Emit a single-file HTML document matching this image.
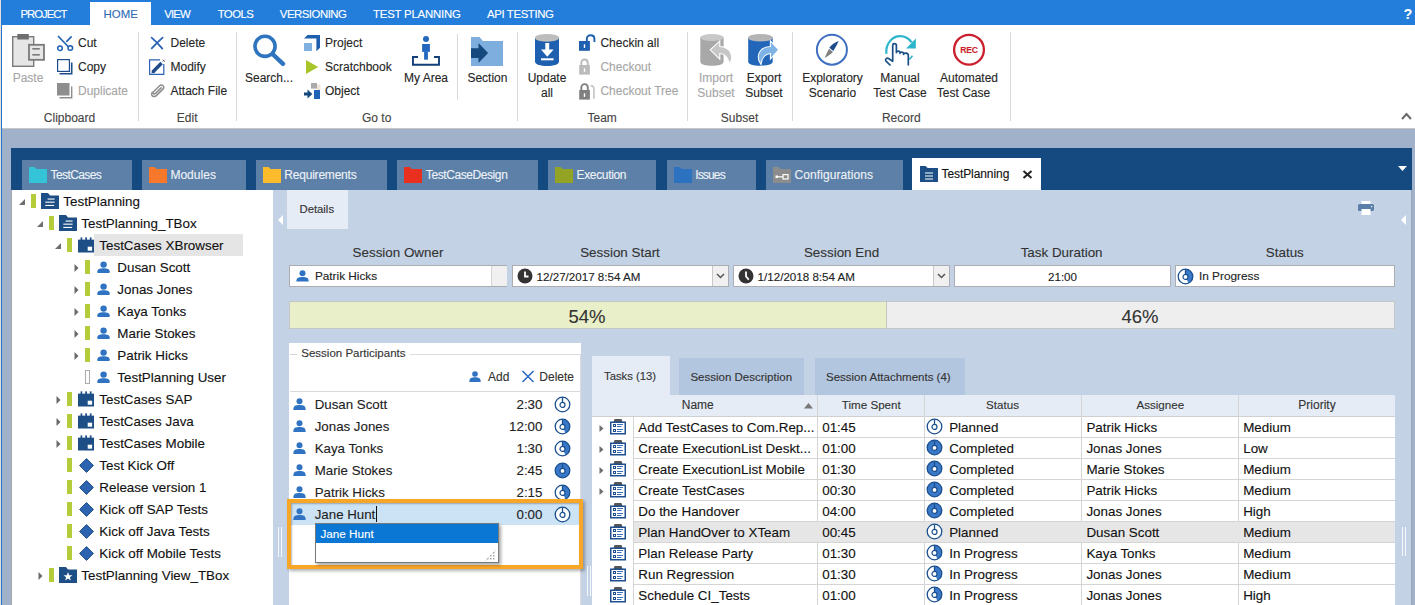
<!DOCTYPE html>
<html><head><meta charset="utf-8"><style>
html,body{margin:0;padding:0;width:1415px;height:605px;overflow:hidden;background:#A3B3CA}
body{position:relative;font-family:"Liberation Sans",sans-serif}
body>div,body>svg{position:absolute}
.t{white-space:nowrap;-webkit-text-stroke:0.12px currentColor}
</style></head><body>
<div style="left:0px;top:0px;width:1415px;height:605px;background:#A0B1C9;"></div>
<div style="left:0px;top:0px;width:1415px;height:25px;background:#237DDA;"></div>
<div style="left:1px;top:25px;width:1414px;height:103px;background:#FFFFFF;"></div>
<div style="left:2px;top:128px;width:1413px;height:1px;background:#C6C6C6;"></div>
<div style="left:1px;top:25px;width:1px;height:580px;background:#1E77D3;"></div>
<div style="left:0px;top:0px;width:1px;height:605px;background:#E6DFD8;"></div>
<div style="left:90px;top:2px;width:61px;height:24px;background:#FFFFFF;"></div>
<div class="t" style="left:20.50px;top:9.35px;font-size:11.4px;line-height:11.4px;color:#FFFFFF;letter-spacing:-1.051px;">PROJECT</div>
<div class="t" style="left:103.50px;top:9.35px;font-size:11.4px;line-height:11.4px;color:#2B6CB3;letter-spacing:0.033px;">HOME</div>
<div class="t" style="left:164.30px;top:9.35px;font-size:11.4px;line-height:11.4px;color:#FFFFFF;letter-spacing:-0.879px;">VIEW</div>
<div class="t" style="left:217.70px;top:9.35px;font-size:11.4px;line-height:11.4px;color:#FFFFFF;letter-spacing:-0.585px;">TOOLS</div>
<div class="t" style="left:279.80px;top:9.35px;font-size:11.4px;line-height:11.4px;color:#FFFFFF;letter-spacing:-0.487px;">VERSIONING</div>
<div class="t" style="left:373.00px;top:9.35px;font-size:11.4px;line-height:11.4px;color:#FFFFFF;letter-spacing:-0.198px;">TEST PLANNING</div>
<div class="t" style="left:487.00px;top:9.35px;font-size:11.4px;line-height:11.4px;color:#FFFFFF;letter-spacing:-0.374px;">API TESTING</div>
<div class="t" style="left:1403.50px;top:7.23px;font-size:14.5px;line-height:14.5px;color:#FFFFFF;letter-spacing:-1.360px;font-weight:bold">?</div>
<div style="left:138px;top:32px;width:1px;height:89px;background:#DADADA;"></div>
<div style="left:236px;top:32px;width:1px;height:89px;background:#DADADA;"></div>
<div style="left:457px;top:34px;width:1px;height:66px;background:#DADADA;"></div>
<div style="left:517px;top:32px;width:1px;height:89px;background:#DADADA;"></div>
<div style="left:687px;top:32px;width:1px;height:89px;background:#DADADA;"></div>
<div style="left:792px;top:32px;width:1px;height:89px;background:#DADADA;"></div>
<div style="left:1010px;top:32px;width:1px;height:89px;background:#DADADA;"></div>
<div class="t" style="left:9.50px;width:120px;text-align:center;top:111.84px;font-size:12px;line-height:12px;color:#444444;">Clipboard</div>
<div class="t" style="left:127.20px;width:120px;text-align:center;top:111.84px;font-size:12px;line-height:12px;color:#444444;">Edit</div>
<div class="t" style="left:316.65px;width:120px;text-align:center;top:111.84px;font-size:12px;line-height:12px;color:#444444;">Go to</div>
<div class="t" style="left:542.15px;width:120px;text-align:center;top:111.84px;font-size:12px;line-height:12px;color:#444444;">Team</div>
<div class="t" style="left:679.55px;width:120px;text-align:center;top:111.84px;font-size:12px;line-height:12px;color:#444444;">Subset</div>
<div class="t" style="left:841.30px;width:120px;text-align:center;top:111.84px;font-size:12px;line-height:12px;color:#444444;">Record</div>
<div class="t" style="left:78px;top:36.84px;font-size:12px;line-height:12px;color:#262626;">Cut</div>
<div class="t" style="left:78px;top:60.84px;font-size:12px;line-height:12px;color:#262626;">Copy</div>
<div class="t" style="left:78px;top:84.84px;font-size:12px;line-height:12px;color:#A6A6A6;">Duplicate</div>
<div class="t" style="left:-2.00px;width:60px;text-align:center;top:71.84px;font-size:12px;line-height:12px;color:#A6A6A6;">Paste</div>
<div class="t" style="left:170.5px;top:36.84px;font-size:12px;line-height:12px;color:#262626;">Delete</div>
<div class="t" style="left:170.5px;top:60.84px;font-size:12px;line-height:12px;color:#262626;">Modify</div>
<div class="t" style="left:170.5px;top:84.84px;font-size:12px;line-height:12px;color:#262626;">Attach File</div>
<div class="t" style="left:229.00px;width:80px;text-align:center;top:71.84px;font-size:12px;line-height:12px;color:#262626;">Search...</div>
<div class="t" style="left:325px;top:36.84px;font-size:12px;line-height:12px;color:#262626;">Project</div>
<div class="t" style="left:325px;top:60.84px;font-size:12px;line-height:12px;color:#262626;">Scratchbook</div>
<div class="t" style="left:325px;top:84.84px;font-size:12px;line-height:12px;color:#262626;">Object</div>
<div class="t" style="left:386.00px;width:80px;text-align:center;top:71.84px;font-size:12px;line-height:12px;color:#262626;">My Area</div>
<div class="t" style="left:447.40px;width:80px;text-align:center;top:71.84px;font-size:12px;line-height:12px;color:#262626;">Section</div>
<div class="t" style="left:507.00px;width:80px;text-align:center;top:71.84px;font-size:12px;line-height:12px;color:#262626;">Update</div>
<div class="t" style="left:507.00px;width:80px;text-align:center;top:86.64px;font-size:12px;line-height:12px;color:#262626;">all</div>
<div class="t" style="left:600.4px;top:36.84px;font-size:12px;line-height:12px;color:#262626;">Checkin all</div>
<div class="t" style="left:600.4px;top:60.84px;font-size:12px;line-height:12px;color:#A6A6A6;">Checkout</div>
<div class="t" style="left:600.4px;top:84.84px;font-size:12px;line-height:12px;color:#A6A6A6;">Checkout Tree</div>
<div class="t" style="left:676.00px;width:80px;text-align:center;top:71.84px;font-size:12px;line-height:12px;color:#A6A6A6;">Import</div>
<div class="t" style="left:676.00px;width:80px;text-align:center;top:86.64px;font-size:12px;line-height:12px;color:#A6A6A6;">Subset</div>
<div class="t" style="left:724.00px;width:80px;text-align:center;top:71.84px;font-size:12px;line-height:12px;color:#262626;">Export</div>
<div class="t" style="left:724.00px;width:80px;text-align:center;top:86.64px;font-size:12px;line-height:12px;color:#262626;">Subset</div>
<div class="t" style="left:792.50px;width:80px;text-align:center;top:71.84px;font-size:12px;line-height:12px;color:#262626;">Exploratory</div>
<div class="t" style="left:792.50px;width:80px;text-align:center;top:86.64px;font-size:12px;line-height:12px;color:#262626;">Scenario</div>
<div class="t" style="left:860.00px;width:80px;text-align:center;top:71.84px;font-size:12px;line-height:12px;color:#262626;">Manual</div>
<div class="t" style="left:860.00px;width:80px;text-align:center;top:86.64px;font-size:12px;line-height:12px;color:#262626;">Test Case</div>
<div class="t" style="left:929.00px;width:80px;text-align:center;top:71.84px;font-size:12px;line-height:12px;color:#262626;">Automated</div>
<div class="t" style="left:923.50px;width:80px;text-align:center;top:86.64px;font-size:12px;line-height:12px;color:#262626;">Test Case</div>
<svg style="left:1401px;top:112px" width="11" height="8" viewBox="0 0 11 8"><path d="M1 7 L5.5 2 L10 7" stroke="#6A6A6A" stroke-width="2" fill="none"/></svg>
<svg style="left:12px;top:34px" width="33" height="33" viewBox="0 0 33 33"><rect x="0.7" y="2.7" width="21" height="29.6" fill="#E6E6E6" stroke="#7A7A7A" stroke-width="1.4"/><rect x="5.3" y="0" width="11.5" height="5.5" fill="#6E6E6E"/><rect x="17" y="10.8" width="15" height="15" fill="#E6E6E6" stroke="#7A7A7A" stroke-width="1.8"/><rect x="20.3" y="14" width="7.5" height="1.6" fill="#7A7A7A"/><rect x="20.3" y="20" width="7.5" height="1.6" fill="#7A7A7A"/></svg>
<svg style="left:57px;top:35px" width="17" height="17" viewBox="0 0 17 17"><path d="M1 1 L11.8 12.2" stroke="#1F5FAF" stroke-width="1.6"/><path d="M14.6 1.4 L9.3 6.9" stroke="#1F5FAF" stroke-width="1.6"/><circle cx="3" cy="13.2" r="2.3" fill="none" stroke="#1F5FAF" stroke-width="1.5"/><circle cx="13.3" cy="13" r="2.3" fill="none" stroke="#1F5FAF" stroke-width="1.5"/></svg>
<svg style="left:57px;top:58px" width="17" height="17" viewBox="0 0 17 17"><rect x="0.6" y="1.6" width="11.8" height="11.8" fill="#FFFFFF" stroke="#1E4C8A" stroke-width="1.2"/><path d="M14.7 4.5 V15.7 H2.5" stroke="#1E4C8A" stroke-width="1.6" fill="none"/></svg>
<svg style="left:57px;top:82px" width="17" height="17" viewBox="0 0 17 17"><rect x="0" y="1" width="12.5" height="12.5" fill="#8E8E8E"/><path d="M14.7 4.5 V15.7 H2.5" stroke="#8E8E8E" stroke-width="1.4" fill="none"/></svg>
<svg style="left:150px;top:36px" width="15" height="14" viewBox="0 0 15 14"><path d="M1.6 1.6 C5 4.5 9 8.5 12.3 12.6 M12.6 1.6 C9 4.8 5 8.8 1.7 12.4" stroke="#2A62B5" stroke-width="1.8" fill="none" stroke-linecap="round"/></svg>
<svg style="left:149px;top:58px" width="17" height="18" viewBox="0 0 17 18"><path d="M11 1.8 H0.6 V16.4 H14.8 V6" fill="none" stroke="#2A62B5" stroke-width="1.2"/><path d="M3.6 14.2 L12.6 5" stroke="#1E4C8A" stroke-width="3.4" stroke-linecap="butt"/><path d="M3.2 12 L2.4 15.4 L5.8 14.6 Z" fill="#1E4C8A"/><path d="M13.6 1.6 L15.8 3.8 M15.8 1.6 L13.6 3.8" stroke="#666" stroke-width="0.9"/></svg>
<svg style="left:151px;top:84px" width="14" height="14" viewBox="0 0 14 14"><path d="M10.6 3.4 L4.6 9.4 C3.9 10.1 3 10.1 2.5 9.6 C2 9.1 2.1 8.2 2.8 7.5 L8.6 1.8 C9.6 0.8 11.2 0.8 12 1.7 C12.9 2.6 12.9 4.1 11.9 5.1 L5.6 11.4 C4.2 12.8 2.3 12.9 1.3 11.9 C0.3 10.9 0.5 9.2 1.8 7.8" stroke="#8E8E8E" stroke-width="1.5" fill="none"/></svg>
<svg style="left:252px;top:33px" width="34" height="34" viewBox="0 0 34 34"><circle cx="13" cy="13.3" r="10.1" fill="none" stroke="#2F74BF" stroke-width="3.6"/><path d="M21.6 22 L31 30.8" stroke="#2F74BF" stroke-width="4.4" stroke-linecap="round"/></svg>
<svg style="left:304px;top:35px" width="17" height="17" viewBox="0 0 17 17"><path d="M3.5 0 H16 V12.8 L12.4 16.2 V3.6 H0 Z" fill="#1F5FAF"/><rect x="0" y="8" width="8" height="8" fill="#7FB0E0"/></svg>
<svg style="left:306px;top:60px" width="13" height="15" viewBox="0 0 13 15"><path d="M0 0 L12.2 7 L0 14 Z" fill="#A8C62A"/></svg>
<svg style="left:303px;top:82px" width="18" height="18" viewBox="0 0 18 18"><rect x="13.5" y="2.5" width="4" height="5.5" fill="#EFE6D8"/><rect x="8" y="1" width="6" height="5.6" fill="#ABABAB"/><rect x="11" y="8" width="6" height="9" fill="#1F64B7"/><path d="M1 10.5 H4.5 V7.5 L9.3 12 L4.5 16.4 V13.4 H1 Z" fill="#15497E"/></svg>
<svg style="left:411px;top:35px" width="30" height="32" viewBox="0 0 30 32"><circle cx="15" cy="3.9" r="3" fill="#2367BF"/><rect x="11.1" y="9" width="7.8" height="7.9" fill="#2367BF"/><rect x="13.1" y="16.9" width="3.8" height="7.8" fill="#2367BF"/><path d="M7 21.95 H1.95 V29.8 H28 V21.95 H23" stroke="#123F7A" stroke-width="1.9" fill="none"/></svg>
<svg style="left:471px;top:37px" width="33" height="30" viewBox="0 0 33 30"><path d="M0 0 H8.6 L11.9 4.1 H32 V29 H0 Z" fill="#7EAEDE"/><path d="M0 11.2 H7.5 V6 L17.1 16 L7.5 26 V21 H0 Z" fill="#15497E"/></svg>
<svg style="left:535px;top:33px" width="25" height="34" viewBox="0 0 25 34"><path d="M0 4 V28.5 C0 31.5 5.5 33 12 33 C18.5 33 24 31.5 24 28.5 V4 Z" fill="#1F5FAF"/><ellipse cx="12" cy="4.6" rx="12" ry="3.6" fill="#BDBDBD"/><path d="M0 4.6 C0 6.6 5.5 8.2 12 8.2 C18.5 8.2 24 6.6 24 4.6" stroke="#D7CCBE" stroke-width="0.7" fill="none"/><rect x="10.3" y="10" width="3.9" height="10" fill="#FFFFFF"/><path d="M6 16.6 H18.6 L12.3 23.8 Z" fill="#FFFFFF"/><rect x="6" y="25.3" width="12.6" height="2" fill="#FFFFFF"/></svg>
<svg style="left:578px;top:34px" width="18" height="18" viewBox="0 0 18 18"><rect x="1" y="7" width="10.9" height="9.8" fill="#1F5FAF"/><path d="M8.8 7.5 V4.8 C8.8 2.6 10.6 1.3 12.6 1.3 C14.6 1.3 16.4 2.6 16.4 4.8 V8" stroke="#1F5FAF" stroke-width="1.9" fill="none"/><rect x="5.8" y="10.3" width="1.4" height="3.6" fill="#fff"/></svg>
<svg style="left:578px;top:58px" width="18" height="18" viewBox="0 0 18 18"><rect x="1.2" y="7" width="10.7" height="9.6" fill="#BBBBBB"/><path d="M3.3 7.5 V5 C3.3 2.7 4.8 1.5 6.5 1.5 C8.2 1.5 9.8 2.7 9.8 5 V7.5" stroke="#BBBBBB" stroke-width="1.9" fill="none"/><rect x="5.8" y="10.3" width="1.4" height="3.6" fill="#fff"/></svg>
<svg style="left:578px;top:82px" width="18" height="18" viewBox="0 0 18 18"><path d="M12.5 3.6 C14.6 3.6 15.9 5 15.9 7 V16.8" stroke="#C8C8C8" stroke-width="1.8" fill="none"/><rect x="1.2" y="8" width="10.7" height="9.6" fill="#808080"/><path d="M3.3 8.5 V5.8 C3.3 3.5 4.8 2.1 6.5 2.1 C8.2 2.1 9.8 3.5 9.8 5.8 V8.5" stroke="#808080" stroke-width="1.9" fill="none"/><rect x="5.8" y="11.3" width="1.4" height="3.6" fill="#fff"/></svg>
<svg style="left:700px;top:33px" width="33" height="34" viewBox="0 0 33 34"><path d="M0.3 4 V28.5 C0.3 31.5 5.5 32.7 12 32.7 C18.5 32.7 23.6 31.5 23.6 28.5 V4 Z" fill="#A8A8A8"/><ellipse cx="12" cy="4.5" rx="11.7" ry="3.5" fill="#C8C8C8"/><path d="M10.2 16.8 L19.8 7.9 V13.5 C26 13.5 31.7 17 31.7 24.8 C31.7 27 30.8 29.5 29.4 31.4 C29 27 26 21 19.8 20.5 V26.1 Z" fill="#C6C6C6" stroke="#FFFFFF" stroke-width="1.1"/></svg>
<svg style="left:748px;top:33px" width="32" height="34" viewBox="0 0 32 34"><path d="M0.2 4 V28.5 C0.2 31.5 5.5 32.7 12.2 32.7 C18.9 32.7 24.7 31.5 24.7 28.5 V4 Z" fill="#2166B8"/><ellipse cx="12.4" cy="4.5" rx="12.2" ry="3.5" fill="#B4B4B4"/><path d="M0.2 4.5 C0.2 6.5 5.5 8 12.4 8 C19.3 8 24.7 6.5 24.7 4.5" stroke="#D7CCBE" stroke-width="0.7" fill="none"/><path d="M30.7 16.8 L22.4 7.9 V13.5 C15 13.5 10.3 18 10.3 24.5 C10.3 27 11.5 29.5 13 31.4 C13.5 27 16 21 22.4 20.5 V26.1 Z" fill="#7FB2E5" stroke="#FFFFFF" stroke-width="1.1"/></svg>
<svg style="left:815px;top:33px" width="34" height="34" viewBox="0 0 34 34"><circle cx="16.9" cy="16.7" r="15" fill="none" stroke="#3F6FC0" stroke-width="2"/><path d="M23.6 8 C22.5 11 20.5 14.5 18.3 17.9 L14.3 14.7 C16.8 11.8 19.6 9.4 23.6 8 Z" fill="#1E4C8A"/><path d="M18 18.9 L14 15.7 C12.5 18.5 11 21.5 9.6 25 C12.6 23.2 15.5 21.5 18 18.9 Z" fill="#808080"/></svg>
<svg style="left:884px;top:34px" width="33" height="33" viewBox="0 0 33 33"><path d="M2.4 19.8 C1.2 9.5 8.5 2.2 16.1 2.2 C21 2.2 25 4.6 27.6 8.4" stroke="#2DB5CC" stroke-width="2.2" fill="none"/><path d="M31.8 4.6 L22.1 14.4 H31.8 Z" fill="#2DB5CC"/><path d="M25.2 25.5 L28.5 21.8" stroke="#2DB5CC" stroke-width="1.6" fill="none"/><path d="M6.5 31.5 L1.8 26.8 C1 25.5 2.5 23.3 4.5 24.5 L8.7 27.3 V11.7 C8.7 9 12.4 9 12.4 11.7 V18.6 C12.4 16.6 16 16.6 16 18.8 V19.3 C16 17.6 19.6 17.6 19.6 19.6 V20.3 C19.6 18.6 24.3 18.6 24.3 21.6 V31.6" stroke="#1C4F86" stroke-width="1.7" fill="none" stroke-linejoin="round"/></svg>
<svg style="left:952px;top:33px" width="34" height="34" viewBox="0 0 34 34"><circle cx="17" cy="16.7" r="14.9" fill="none" stroke="#CC1F2D" stroke-width="2.3"/></svg>
<div class="t" style="left:960.3px;top:45.62px;font-size:8.6px;line-height:8.6px;color:#CC1F2D;font-weight:bold;letter-spacing:-0.2px">REC</div>
<div style="left:11px;top:148px;width:1401px;height:42px;background:#154A80;"></div>
<div style="left:22px;top:160px;width:110px;height:30px;background:#5C80A8;"></div>
<svg style="left:29px;top:167px" width="18" height="16" viewBox="0 0 18 16"><path d="M0 0 H5.6 L7.6 2 H18 V16 H0 Z" fill="#35C3D7"/></svg>
<div class="t" style="left:50.50px;top:169.04px;font-size:12px;line-height:12px;color:#EEF2F7;letter-spacing:-0.590px;">TestCases</div>
<div style="left:142px;top:160px;width:104px;height:30px;background:#5C80A8;"></div>
<svg style="left:149px;top:167px" width="18" height="16" viewBox="0 0 18 16"><path d="M0 0 H5.6 L7.6 2 H18 V16 H0 Z" fill="#F7782A"/></svg>
<div class="t" style="left:170.40px;top:169.04px;font-size:12px;line-height:12px;color:#EEF2F7;letter-spacing:0.023px;">Modules</div>
<div style="left:256px;top:160px;width:131px;height:30px;background:#5C80A8;"></div>
<svg style="left:263px;top:167px" width="18" height="16" viewBox="0 0 18 16"><path d="M0 0 H5.6 L7.6 2 H18 V16 H0 Z" fill="#FBBB2A"/></svg>
<div class="t" style="left:284.30px;top:169.04px;font-size:12px;line-height:12px;color:#EEF2F7;letter-spacing:-0.209px;">Requirements</div>
<div style="left:397px;top:160px;width:141px;height:30px;background:#5C80A8;"></div>
<svg style="left:404px;top:167px" width="18" height="16" viewBox="0 0 18 16"><path d="M0 0 H5.6 L7.6 2 H18 V16 H0 Z" fill="#E9301F"/></svg>
<div class="t" style="left:425.80px;top:169.04px;font-size:12px;line-height:12px;color:#EEF2F7;letter-spacing:-0.413px;">TestCaseDesign</div>
<div style="left:548px;top:160px;width:108px;height:30px;background:#5C80A8;"></div>
<svg style="left:555px;top:167px" width="18" height="16" viewBox="0 0 18 16"><path d="M0 0 H5.6 L7.6 2 H18 V16 H0 Z" fill="#93A323"/></svg>
<div class="t" style="left:576.50px;top:169.04px;font-size:12px;line-height:12px;color:#EEF2F7;letter-spacing:-0.338px;">Execution</div>
<div style="left:667px;top:160px;width:89px;height:30px;background:#5C80A8;"></div>
<svg style="left:674px;top:167px" width="18" height="16" viewBox="0 0 18 16"><path d="M0 0 H5.6 L7.6 2 H18 V16 H0 Z" fill="#2D72C0"/></svg>
<div class="t" style="left:695.20px;top:169.04px;font-size:12px;line-height:12px;color:#EEF2F7;letter-spacing:-0.836px;">Issues</div>
<div style="left:766px;top:160px;width:137px;height:30px;background:#5C80A8;"></div>
<svg style="left:773px;top:167px" width="18" height="16" viewBox="0 0 18 16"><path d="M0 0 H5.6 L7.6 2 H18 V16 H0 Z" fill="#8C8C8C"/></svg>
<div class="t" style="left:794.50px;top:169.04px;font-size:12px;line-height:12px;color:#EEF2F7;letter-spacing:0.086px;">Configurations</div>
<svg style="left:773px;top:167px" width="18" height="16" viewBox="0 0 18 16"><rect x="2.5" y="8.5" width="2.5" height="2.5" fill="#fff"/><rect x="5" y="9.2" width="5" height="1.2" fill="#fff"/><rect x="10" y="7.6" width="5" height="4.4" fill="none" stroke="#fff" stroke-width="1.2"/></svg>
<div style="left:912px;top:158px;width:129px;height:32px;background:#FFFFFF;"></div>
<svg style="left:920px;top:166px" width="18" height="16" viewBox="0 0 18 16"><path d="M0 0 H5.6 L7.6 2 H18 V16 H0 Z" fill="#1D4E86"/><path d="M5 7 H13 M5 10 H13 M5 13 H13" stroke="#fff" stroke-width="1.2"/></svg>
<div class="t" style="left:941.50px;top:168.04px;font-size:12px;line-height:12px;color:#111111;letter-spacing:-0.083px;">TestPlanning</div>
<svg style="left:1022px;top:170px" width="11" height="9" viewBox="0 0 11 9"><path d="M1.5 1 L9.5 8 M9.5 1 L1.5 8" stroke="#222" stroke-width="2"/></svg>
<svg style="left:1398px;top:166px" width="9" height="5" viewBox="0 0 9 5"><path d="M0 0 H9 L4.5 5 Z" fill="#FFFFFF"/></svg>
<div style="left:11px;top:190px;width:1401px;height:415px;background:#C3D2E5;"></div>
<div style="left:1411px;top:190px;width:1px;height:415px;background:#9AA7B8;"></div>
<div style="left:11px;top:190px;width:262px;height:415px;background:#FFFFFF;"></div>
<div style="left:11px;top:190px;width:1px;height:415px;background:#A8A8A8;"></div>
<div style="left:94px;top:234px;width:149px;height:22px;background:#E5E5E5;"></div>
<svg style="left:19px;top:199px" width="6" height="6" viewBox="0 0 6 6"><path d="M6 0 V6 H0 Z" fill="#6E6E6E"/></svg>
<div style="left:31px;top:194px;width:5px;height:14px;background:#B4CB3A;"></div>
<svg style="left:41px;top:193px" width="18" height="16" viewBox="0 0 18 16"><path d="M0 0 H7 L9 2.5 H18 V16 H0 Z" fill="#1D4E86"/><rect x="6.6" y="5.5" width="7" height="1.1" fill="#fff"/><rect x="4.3" y="8.6" width="9.3" height="1.1" fill="#fff"/><rect x="4.3" y="11.9" width="8.8" height="1.1" fill="#fff"/></svg>
<div class="t" style="left:63.3px;top:194.96px;font-size:13.4px;line-height:13.4px;color:#111111;">TestPlanning</div>
<svg style="left:37px;top:221px" width="6" height="6" viewBox="0 0 6 6"><path d="M6 0 V6 H0 Z" fill="#6E6E6E"/></svg>
<div style="left:49px;top:216px;width:5px;height:14px;background:#B4CB3A;"></div>
<svg style="left:59px;top:215px" width="18" height="16" viewBox="0 0 18 16"><path d="M0 0 H7 L9 2.5 H18 V16 H0 Z" fill="#1D4E86"/><rect x="6.6" y="5.5" width="7" height="1.1" fill="#fff"/><rect x="4.3" y="8.6" width="9.3" height="1.1" fill="#fff"/><rect x="4.3" y="11.9" width="8.8" height="1.1" fill="#fff"/></svg>
<div class="t" style="left:81.3px;top:216.96px;font-size:13.4px;line-height:13.4px;color:#111111;">TestPlanning_TBox</div>
<svg style="left:55px;top:243px" width="6" height="6" viewBox="0 0 6 6"><path d="M6 0 V6 H0 Z" fill="#6E6E6E"/></svg>
<div style="left:67px;top:238px;width:5px;height:14px;background:#B4CB3A;"></div>
<svg style="left:78px;top:237px" width="16" height="16" viewBox="0 0 16 16"><rect x="0" y="2.3" width="16" height="13.2" fill="#1D4E86"/><rect x="2.5" y="0.4" width="1.8" height="3.4" fill="#1D4E86"/><rect x="7.2" y="0.4" width="1.8" height="3.4" fill="#1D4E86"/><rect x="11.8" y="0.4" width="1.8" height="3.4" fill="#1D4E86"/><rect x="0" y="1.6" width="2.5" height="0.9" fill="#fff"/><rect x="4.3" y="1.6" width="2.9" height="0.9" fill="#fff"/><rect x="9" y="1.6" width="2.8" height="0.9" fill="#fff"/><rect x="13.6" y="1.6" width="2.4" height="0.9" fill="#fff"/><rect x="9.7" y="9.7" width="4.4" height="4" fill="#fff"/></svg>
<div class="t" style="left:99.3px;top:238.96px;font-size:13.4px;line-height:13.4px;color:#111111;">TestCases XBrowser</div>
<svg style="left:73.6px;top:264px" width="5" height="8" viewBox="0 0 5 8"><path d="M0.5 0 L4.5 4 L0.5 8 Z" fill="#6A6A6A"/></svg>
<div style="left:85px;top:260px;width:5px;height:14px;background:#B4CB3A;"></div>
<svg style="left:97px;top:261px" width="13" height="12" viewBox="0 0 13 12"><circle cx="6.6" cy="3.6" r="3.2" fill="#2F73C2"/><path d="M0.2 11 C0.2 8.3 2.5 7.3 6.5 7.3 C10.5 7.3 12.8 8.3 12.8 11 Q12.8 12 11.8 12 H1.2 Q0.2 12 0.2 11 Z" fill="#2F73C2"/></svg>
<div class="t" style="left:117.3px;top:260.96px;font-size:13.4px;line-height:13.4px;color:#111111;">Dusan Scott</div>
<svg style="left:73.6px;top:286px" width="5" height="8" viewBox="0 0 5 8"><path d="M0.5 0 L4.5 4 L0.5 8 Z" fill="#6A6A6A"/></svg>
<div style="left:85px;top:282px;width:5px;height:14px;background:#B4CB3A;"></div>
<svg style="left:97px;top:283px" width="13" height="12" viewBox="0 0 13 12"><circle cx="6.6" cy="3.6" r="3.2" fill="#2F73C2"/><path d="M0.2 11 C0.2 8.3 2.5 7.3 6.5 7.3 C10.5 7.3 12.8 8.3 12.8 11 Q12.8 12 11.8 12 H1.2 Q0.2 12 0.2 11 Z" fill="#2F73C2"/></svg>
<div class="t" style="left:117.3px;top:282.96px;font-size:13.4px;line-height:13.4px;color:#111111;">Jonas Jones</div>
<svg style="left:73.6px;top:308px" width="5" height="8" viewBox="0 0 5 8"><path d="M0.5 0 L4.5 4 L0.5 8 Z" fill="#6A6A6A"/></svg>
<div style="left:85px;top:304px;width:5px;height:14px;background:#B4CB3A;"></div>
<svg style="left:97px;top:305px" width="13" height="12" viewBox="0 0 13 12"><circle cx="6.6" cy="3.6" r="3.2" fill="#2F73C2"/><path d="M0.2 11 C0.2 8.3 2.5 7.3 6.5 7.3 C10.5 7.3 12.8 8.3 12.8 11 Q12.8 12 11.8 12 H1.2 Q0.2 12 0.2 11 Z" fill="#2F73C2"/></svg>
<div class="t" style="left:117.3px;top:304.96px;font-size:13.4px;line-height:13.4px;color:#111111;">Kaya Tonks</div>
<svg style="left:73.6px;top:330px" width="5" height="8" viewBox="0 0 5 8"><path d="M0.5 0 L4.5 4 L0.5 8 Z" fill="#6A6A6A"/></svg>
<div style="left:85px;top:326px;width:5px;height:14px;background:#B4CB3A;"></div>
<svg style="left:97px;top:327px" width="13" height="12" viewBox="0 0 13 12"><circle cx="6.6" cy="3.6" r="3.2" fill="#2F73C2"/><path d="M0.2 11 C0.2 8.3 2.5 7.3 6.5 7.3 C10.5 7.3 12.8 8.3 12.8 11 Q12.8 12 11.8 12 H1.2 Q0.2 12 0.2 11 Z" fill="#2F73C2"/></svg>
<div class="t" style="left:117.3px;top:326.96px;font-size:13.4px;line-height:13.4px;color:#111111;">Marie Stokes</div>
<svg style="left:73.6px;top:352px" width="5" height="8" viewBox="0 0 5 8"><path d="M0.5 0 L4.5 4 L0.5 8 Z" fill="#6A6A6A"/></svg>
<div style="left:85px;top:348px;width:5px;height:14px;background:#B4CB3A;"></div>
<svg style="left:97px;top:349px" width="13" height="12" viewBox="0 0 13 12"><circle cx="6.6" cy="3.6" r="3.2" fill="#2F73C2"/><path d="M0.2 11 C0.2 8.3 2.5 7.3 6.5 7.3 C10.5 7.3 12.8 8.3 12.8 11 Q12.8 12 11.8 12 H1.2 Q0.2 12 0.2 11 Z" fill="#2F73C2"/></svg>
<div class="t" style="left:117.3px;top:348.96px;font-size:13.4px;line-height:13.4px;color:#111111;">Patrik Hicks</div>
<div style="left:85px;top:370px;width:5px;height:14px;background:transparent;box-sizing:border-box;border:1px solid #AAAAAA"></div>
<svg style="left:97px;top:371px" width="13" height="12" viewBox="0 0 13 12"><circle cx="6.6" cy="3.6" r="3.2" fill="#2F73C2"/><path d="M0.2 11 C0.2 8.3 2.5 7.3 6.5 7.3 C10.5 7.3 12.8 8.3 12.8 11 Q12.8 12 11.8 12 H1.2 Q0.2 12 0.2 11 Z" fill="#2F73C2"/></svg>
<div class="t" style="left:117.3px;top:370.96px;font-size:13.4px;line-height:13.4px;color:#111111;">TestPlanning User</div>
<svg style="left:55.599999999999994px;top:396px" width="5" height="8" viewBox="0 0 5 8"><path d="M0.5 0 L4.5 4 L0.5 8 Z" fill="#6A6A6A"/></svg>
<div style="left:67px;top:392px;width:5px;height:14px;background:#B4CB3A;"></div>
<svg style="left:78px;top:391px" width="16" height="16" viewBox="0 0 16 16"><rect x="0" y="2.3" width="16" height="13.2" fill="#1D4E86"/><rect x="2.5" y="0.4" width="1.8" height="3.4" fill="#1D4E86"/><rect x="7.2" y="0.4" width="1.8" height="3.4" fill="#1D4E86"/><rect x="11.8" y="0.4" width="1.8" height="3.4" fill="#1D4E86"/><rect x="0" y="1.6" width="2.5" height="0.9" fill="#fff"/><rect x="4.3" y="1.6" width="2.9" height="0.9" fill="#fff"/><rect x="9" y="1.6" width="2.8" height="0.9" fill="#fff"/><rect x="13.6" y="1.6" width="2.4" height="0.9" fill="#fff"/><rect x="9.7" y="9.7" width="4.4" height="4" fill="#fff"/></svg>
<div class="t" style="left:99.3px;top:392.96px;font-size:13.4px;line-height:13.4px;color:#111111;">TestCases SAP</div>
<svg style="left:55.599999999999994px;top:418px" width="5" height="8" viewBox="0 0 5 8"><path d="M0.5 0 L4.5 4 L0.5 8 Z" fill="#6A6A6A"/></svg>
<div style="left:67px;top:414px;width:5px;height:14px;background:#B4CB3A;"></div>
<svg style="left:78px;top:413px" width="16" height="16" viewBox="0 0 16 16"><rect x="0" y="2.3" width="16" height="13.2" fill="#1D4E86"/><rect x="2.5" y="0.4" width="1.8" height="3.4" fill="#1D4E86"/><rect x="7.2" y="0.4" width="1.8" height="3.4" fill="#1D4E86"/><rect x="11.8" y="0.4" width="1.8" height="3.4" fill="#1D4E86"/><rect x="0" y="1.6" width="2.5" height="0.9" fill="#fff"/><rect x="4.3" y="1.6" width="2.9" height="0.9" fill="#fff"/><rect x="9" y="1.6" width="2.8" height="0.9" fill="#fff"/><rect x="13.6" y="1.6" width="2.4" height="0.9" fill="#fff"/><rect x="9.7" y="9.7" width="4.4" height="4" fill="#fff"/></svg>
<div class="t" style="left:99.3px;top:414.96px;font-size:13.4px;line-height:13.4px;color:#111111;">TestCases Java</div>
<svg style="left:55.599999999999994px;top:440px" width="5" height="8" viewBox="0 0 5 8"><path d="M0.5 0 L4.5 4 L0.5 8 Z" fill="#6A6A6A"/></svg>
<div style="left:67px;top:436px;width:5px;height:14px;background:#B4CB3A;"></div>
<svg style="left:78px;top:435px" width="16" height="16" viewBox="0 0 16 16"><rect x="0" y="2.3" width="16" height="13.2" fill="#1D4E86"/><rect x="2.5" y="0.4" width="1.8" height="3.4" fill="#1D4E86"/><rect x="7.2" y="0.4" width="1.8" height="3.4" fill="#1D4E86"/><rect x="11.8" y="0.4" width="1.8" height="3.4" fill="#1D4E86"/><rect x="0" y="1.6" width="2.5" height="0.9" fill="#fff"/><rect x="4.3" y="1.6" width="2.9" height="0.9" fill="#fff"/><rect x="9" y="1.6" width="2.8" height="0.9" fill="#fff"/><rect x="13.6" y="1.6" width="2.4" height="0.9" fill="#fff"/><rect x="9.7" y="9.7" width="4.4" height="4" fill="#fff"/></svg>
<div class="t" style="left:99.3px;top:436.96px;font-size:13.4px;line-height:13.4px;color:#111111;">TestCases Mobile</div>
<div style="left:67px;top:458px;width:5px;height:14px;background:#B4CB3A;"></div>
<svg style="left:79px;top:457.5px" width="15" height="15" viewBox="0 0 15 15"><path d="M7.5 0.6 L14.4 7.5 L7.5 14.4 L0.6 7.5 Z" fill="#2D64B0" stroke="#1D4E86" stroke-width="1"/></svg>
<div class="t" style="left:99.3px;top:458.96px;font-size:13.4px;line-height:13.4px;color:#111111;">Test Kick Off</div>
<div style="left:67px;top:480px;width:5px;height:14px;background:#B4CB3A;"></div>
<svg style="left:79px;top:479.5px" width="15" height="15" viewBox="0 0 15 15"><path d="M7.5 0.6 L14.4 7.5 L7.5 14.4 L0.6 7.5 Z" fill="#2D64B0" stroke="#1D4E86" stroke-width="1"/></svg>
<div class="t" style="left:99.3px;top:480.96px;font-size:13.4px;line-height:13.4px;color:#111111;">Release version 1</div>
<div style="left:67px;top:502px;width:5px;height:14px;background:#B4CB3A;"></div>
<svg style="left:79px;top:501.5px" width="15" height="15" viewBox="0 0 15 15"><path d="M7.5 0.6 L14.4 7.5 L7.5 14.4 L0.6 7.5 Z" fill="#2D64B0" stroke="#1D4E86" stroke-width="1"/></svg>
<div class="t" style="left:99.3px;top:502.96px;font-size:13.4px;line-height:13.4px;color:#111111;">Kick off SAP Tests</div>
<div style="left:67px;top:524px;width:5px;height:14px;background:#B4CB3A;"></div>
<svg style="left:79px;top:523.5px" width="15" height="15" viewBox="0 0 15 15"><path d="M7.5 0.6 L14.4 7.5 L7.5 14.4 L0.6 7.5 Z" fill="#2D64B0" stroke="#1D4E86" stroke-width="1"/></svg>
<div class="t" style="left:99.3px;top:524.96px;font-size:13.4px;line-height:13.4px;color:#111111;">Kick off Java Tests</div>
<div style="left:67px;top:546px;width:5px;height:14px;background:#B4CB3A;"></div>
<svg style="left:79px;top:545.5px" width="15" height="15" viewBox="0 0 15 15"><path d="M7.5 0.6 L14.4 7.5 L7.5 14.4 L0.6 7.5 Z" fill="#2D64B0" stroke="#1D4E86" stroke-width="1"/></svg>
<div class="t" style="left:99.3px;top:546.96px;font-size:13.4px;line-height:13.4px;color:#111111;">Kick off Mobile Tests</div>
<svg style="left:37.599999999999994px;top:572px" width="5" height="8" viewBox="0 0 5 8"><path d="M0.5 0 L4.5 4 L0.5 8 Z" fill="#6A6A6A"/></svg>
<div style="left:49px;top:568px;width:5px;height:14px;background:#B4CB3A;"></div>
<svg style="left:59px;top:567px" width="18" height="16" viewBox="0 0 18 16"><path d="M0 0 H7 L9 2.5 H18 V16 H0 Z" fill="#1D4E86"/><path d="M9 5 L10.2 8.2 L13.5 8.3 L10.9 10.3 L11.8 13.5 L9 11.6 L6.2 13.5 L7.1 10.3 L4.5 8.3 L7.8 8.2 Z" fill="#fff"/></svg>
<div class="t" style="left:81.3px;top:568.96px;font-size:13.4px;line-height:13.4px;color:#111111;">TestPlanning View_TBox</div>
<svg style="left:278px;top:215px" width="5" height="10" viewBox="0 0 5 10"><path d="M5 0 V10 L0 5 Z" fill="#FFFFFF"/></svg>
<div style="left:287px;top:190px;width:61px;height:39px;background:#E5ECF5;"></div>
<div class="t" style="left:299.5px;top:204.43px;font-size:11.3px;line-height:11.3px;color:#333333;">Details</div>
<svg style="left:1358px;top:201px" width="16" height="14" viewBox="0 0 16 14"><rect x="3.5" y="0" width="9" height="4" fill="#FFFFFF"/><rect x="0" y="3" width="16" height="7" rx="1.5" fill="#5A7FA8"/><rect x="3.5" y="8" width="9" height="6" fill="#FFFFFF"/><rect x="13" y="5" width="1.2" height="1.2" fill="#fff"/></svg>
<svg style="left:1401px;top:215px" width="5" height="10" viewBox="0 0 5 10"><path d="M5 0 V10 L0 5 Z" fill="#FFFFFF"/></svg>
<div class="t" style="left:298.00px;width:200px;text-align:center;top:245.86px;font-size:13.4px;line-height:13.4px;color:#333333;">Session Owner</div>
<div class="t" style="left:520.00px;width:200px;text-align:center;top:245.86px;font-size:13.4px;line-height:13.4px;color:#333333;">Session Start</div>
<div class="t" style="left:741.50px;width:200px;text-align:center;top:245.86px;font-size:13.4px;line-height:13.4px;color:#333333;">Session End</div>
<div class="t" style="left:961.60px;width:200px;text-align:center;top:245.86px;font-size:13.4px;line-height:13.4px;color:#333333;">Task Duration</div>
<div class="t" style="left:1184.80px;width:200px;text-align:center;top:245.86px;font-size:13.4px;line-height:13.4px;color:#333333;">Status</div>
<div style="left:289px;top:265px;width:218px;height:22px;background:#FFFFFF;box-sizing:border-box;border:1px solid #ABADB3"></div>
<div style="left:512px;top:265px;width:217px;height:22px;background:#FFFFFF;box-sizing:border-box;border:1px solid #ABADB3"></div>
<div style="left:733px;top:265px;width:217px;height:22px;background:#FFFFFF;box-sizing:border-box;border:1px solid #ABADB3"></div>
<div style="left:954px;top:265px;width:217px;height:22px;background:#FFFFFF;box-sizing:border-box;border:1px solid #ABADB3"></div>
<div style="left:1175px;top:265px;width:220px;height:22px;background:#FFFFFF;box-sizing:border-box;border:1px solid #ABADB3"></div>
<div style="left:491px;top:266px;width:16px;height:20px;background:#F0F0F0;box-sizing:border-box;border-left:1px solid #D5D5D5"></div>
<svg style="left:296px;top:270px" width="13" height="12" viewBox="0 0 13 12"><circle cx="6.5" cy="3.3" r="3" fill="#2F73C2"/><path d="M0.3 11.5 C0.3 7.6 2.7 7 6.5 7 C10.3 7 12.7 7.6 12.7 11.5 Z" fill="#2F73C2"/></svg>
<div class="t" style="left:314.9px;top:271.01px;font-size:11.8px;line-height:11.8px;color:#222222;">Patrik Hicks</div>
<div style="left:712px;top:266px;width:16px;height:20px;background:#F0F0F0;box-sizing:border-box;border-left:1px solid #C8C8C8"></div>
<svg style="left:716px;top:273px" width="9" height="6" viewBox="0 0 9 6"><path d="M1 1 L4.5 4.5 L8 1" stroke="#555" stroke-width="1.5" fill="none"/></svg>
<div style="left:933px;top:266px;width:16px;height:20px;background:#F0F0F0;box-sizing:border-box;border-left:1px solid #C8C8C8"></div>
<svg style="left:937px;top:273px" width="9" height="6" viewBox="0 0 9 6"><path d="M1 1 L4.5 4.5 L8 1" stroke="#555" stroke-width="1.5" fill="none"/></svg>
<svg style="left:517px;top:268px" width="16" height="16" viewBox="0 0 16 16"><circle cx="8" cy="8" r="7.5" fill="#333333"/><path d="M8 3.5 V8.5 H11.5" stroke="#fff" stroke-width="1.8" fill="none"/></svg>
<div class="t" style="left:536.6px;top:270.78px;font-size:11.6px;line-height:11.6px;color:#222222;">12/27/2017 8:54 AM</div>
<svg style="left:738px;top:268px" width="16" height="16" viewBox="0 0 16 16"><circle cx="8" cy="8" r="7.5" fill="#333333"/><path d="M8 3.5 V8.5 L10.8 11.6" stroke="#fff" stroke-width="1.8" fill="none"/></svg>
<div class="t" style="left:757.6px;top:270.78px;font-size:11.6px;line-height:11.6px;color:#222222;">1/12/2018 8:54 AM</div>
<div class="t" style="left:1022.50px;width:80px;text-align:center;top:270.78px;font-size:11.6px;line-height:11.6px;color:#222222;">21:00</div>
<svg style="left:1177px;top:268px" width="17" height="17" viewBox="0 0 17 17"><circle cx="8.5" cy="8.5" r="7.3" fill="#FFFFFF"/><path d="M8.5 8.5 V1.2 A7.3 7.3 0 0 1 11.5 15.2 Z" fill="#3A78C8"/><circle cx="8.5" cy="8.5" r="7.3" fill="none" stroke="#1A4F8F" stroke-width="1.3"/><path d="M8.5 1.3 V6.3" stroke="#1A4F8F" stroke-width="1.3"/><circle cx="8.5" cy="8.9" r="2.5" fill="#FFFFFF" stroke="#1A4F8F" stroke-width="1.2"/></svg>
<div class="t" style="left:1199px;top:270.61px;font-size:11.8px;line-height:11.8px;color:#222222;">In Progress</div>
<div style="left:289px;top:301px;width:1106px;height:28px;background:#EEEEEE;box-sizing:border-box;border:1px solid #C6C6C6"></div>
<div style="left:290px;top:302px;width:596px;height:26px;background:#E9F0C9;"></div>
<div style="left:886px;top:302px;width:1px;height:26px;background:#C6C6C6;"></div>
<div class="t" style="left:537.00px;width:100px;text-align:center;top:307.94px;font-size:18.5px;line-height:18.5px;color:#333333;">54%</div>
<div class="t" style="left:1090.00px;width:100px;text-align:center;top:307.94px;font-size:18.5px;line-height:18.5px;color:#333333;">46%</div>
<div style="left:289px;top:343px;width:292px;height:262px;background:#FFFFFF;"></div>
<div style="left:290px;top:354px;width:7px;height:1px;background:#D5D5D5;"></div>
<div style="left:410px;top:354px;width:170px;height:1px;background:#DCDCDC;"></div>
<div style="left:580px;top:354px;width:1px;height:251px;background:#DCDCDC;"></div>
<div class="t" style="left:301.3px;top:348.07px;font-size:11.5px;line-height:11.5px;color:#333333;">Session Participants</div>
<svg style="left:469px;top:371px" width="12" height="11" viewBox="0 0 12 11"><circle cx="6" cy="3" r="2.8" fill="#2F73C2"/><path d="M0.3 11 C0.3 7 2.5 6.3 6 6.3 C9.5 6.3 11.7 7 11.7 11 Z" fill="#2F73C2"/></svg>
<div class="t" style="left:488px;top:370.84px;font-size:12px;line-height:12px;color:#333333;">Add</div>
<svg style="left:521px;top:370px" width="14" height="13" viewBox="0 0 14 13"><path d="M1.5 1 L12.5 12 M12.5 1 L1.5 12" stroke="#2F6CC5" stroke-width="1.6"/></svg>
<div class="t" style="left:539.3px;top:370.84px;font-size:12px;line-height:12px;color:#333333;">Delete</div>
<div style="left:290px;top:391px;width:290px;height:1px;background:#D9D9D9;"></div>
<div style="left:291px;top:503px;width:289px;height:22px;background:#CCE2F5;"></div>
<svg style="left:293px;top:397.5px" width="13" height="12" viewBox="0 0 13 12"><circle cx="6.5" cy="3.2" r="3" fill="#2F73C2"/><path d="M0.3 12 C0.3 7.6 2.7 7 6.5 7 C10.3 7 12.7 7.6 12.7 12 Z" fill="#2F73C2"/></svg>
<div class="t" style="left:314.7px;top:398.14px;font-size:13.3px;line-height:13.3px;color:#222222;">Dusan Scott</div>
<div class="t" style="left:482.40px;width:60px;text-align:right;top:398.14px;font-size:13.3px;line-height:13.3px;color:#222222;">2:30</div>
<svg style="left:553.5px;top:395.5px" width="17" height="17" viewBox="0 0 17 17"><circle cx="8.5" cy="8.5" r="7.3" fill="#FFFFFF" stroke="#1A4F8F" stroke-width="1.3"/><path d="M8.5 1.3 V6.3" stroke="#1A4F8F" stroke-width="1.3"/><circle cx="8.5" cy="8.9" r="2.5" fill="#FFFFFF" stroke="#1A4F8F" stroke-width="1.2"/></svg>
<svg style="left:293px;top:419.5px" width="13" height="12" viewBox="0 0 13 12"><circle cx="6.5" cy="3.2" r="3" fill="#2F73C2"/><path d="M0.3 12 C0.3 7.6 2.7 7 6.5 7 C10.3 7 12.7 7.6 12.7 12 Z" fill="#2F73C2"/></svg>
<div class="t" style="left:314.7px;top:420.14px;font-size:13.3px;line-height:13.3px;color:#222222;">Jonas Jones</div>
<div class="t" style="left:482.40px;width:60px;text-align:right;top:420.14px;font-size:13.3px;line-height:13.3px;color:#222222;">12:00</div>
<svg style="left:553.5px;top:417.5px" width="17" height="17" viewBox="0 0 17 17"><circle cx="8.5" cy="8.5" r="7.3" fill="#FFFFFF"/><path d="M8.5 8.5 V1.2 A7.3 7.3 0 0 1 11.5 15.2 Z" fill="#3A78C8"/><circle cx="8.5" cy="8.5" r="7.3" fill="none" stroke="#1A4F8F" stroke-width="1.3"/><path d="M8.5 1.3 V6.3" stroke="#1A4F8F" stroke-width="1.3"/><circle cx="8.5" cy="8.9" r="2.5" fill="#FFFFFF" stroke="#1A4F8F" stroke-width="1.2"/></svg>
<svg style="left:293px;top:441.5px" width="13" height="12" viewBox="0 0 13 12"><circle cx="6.5" cy="3.2" r="3" fill="#2F73C2"/><path d="M0.3 12 C0.3 7.6 2.7 7 6.5 7 C10.3 7 12.7 7.6 12.7 12 Z" fill="#2F73C2"/></svg>
<div class="t" style="left:314.7px;top:442.14px;font-size:13.3px;line-height:13.3px;color:#222222;">Kaya Tonks</div>
<div class="t" style="left:482.40px;width:60px;text-align:right;top:442.14px;font-size:13.3px;line-height:13.3px;color:#222222;">1:30</div>
<svg style="left:553.5px;top:439.5px" width="17" height="17" viewBox="0 0 17 17"><circle cx="8.5" cy="8.5" r="7.3" fill="#FFFFFF"/><path d="M8.5 8.5 V1.2 A7.3 7.3 0 0 1 11.5 15.2 Z" fill="#3A78C8"/><circle cx="8.5" cy="8.5" r="7.3" fill="none" stroke="#1A4F8F" stroke-width="1.3"/><path d="M8.5 1.3 V6.3" stroke="#1A4F8F" stroke-width="1.3"/><circle cx="8.5" cy="8.9" r="2.5" fill="#FFFFFF" stroke="#1A4F8F" stroke-width="1.2"/></svg>
<svg style="left:293px;top:463.5px" width="13" height="12" viewBox="0 0 13 12"><circle cx="6.5" cy="3.2" r="3" fill="#2F73C2"/><path d="M0.3 12 C0.3 7.6 2.7 7 6.5 7 C10.3 7 12.7 7.6 12.7 12 Z" fill="#2F73C2"/></svg>
<div class="t" style="left:314.7px;top:464.14px;font-size:13.3px;line-height:13.3px;color:#222222;">Marie Stokes</div>
<div class="t" style="left:482.40px;width:60px;text-align:right;top:464.14px;font-size:13.3px;line-height:13.3px;color:#222222;">2:45</div>
<svg style="left:553.5px;top:461.5px" width="17" height="17" viewBox="0 0 17 17"><circle cx="8.5" cy="8.5" r="7.3" fill="#3A78C8" stroke="#1A4F8F" stroke-width="1.3"/><path d="M8.5 1.3 V6.3" stroke="#1A4F8F" stroke-width="1.3"/><circle cx="8.5" cy="8.9" r="2.5" fill="#FFFFFF" stroke="#1A4F8F" stroke-width="1.2"/></svg>
<svg style="left:293px;top:485.5px" width="13" height="12" viewBox="0 0 13 12"><circle cx="6.5" cy="3.2" r="3" fill="#2F73C2"/><path d="M0.3 12 C0.3 7.6 2.7 7 6.5 7 C10.3 7 12.7 7.6 12.7 12 Z" fill="#2F73C2"/></svg>
<div class="t" style="left:314.7px;top:486.14px;font-size:13.3px;line-height:13.3px;color:#222222;">Patrik Hicks</div>
<div class="t" style="left:482.40px;width:60px;text-align:right;top:486.14px;font-size:13.3px;line-height:13.3px;color:#222222;">2:15</div>
<svg style="left:553.5px;top:483.5px" width="17" height="17" viewBox="0 0 17 17"><circle cx="8.5" cy="8.5" r="7.3" fill="#FFFFFF"/><path d="M8.5 8.5 V1.2 A7.3 7.3 0 0 1 11.5 15.2 Z" fill="#3A78C8"/><circle cx="8.5" cy="8.5" r="7.3" fill="none" stroke="#1A4F8F" stroke-width="1.3"/><path d="M8.5 1.3 V6.3" stroke="#1A4F8F" stroke-width="1.3"/><circle cx="8.5" cy="8.9" r="2.5" fill="#FFFFFF" stroke="#1A4F8F" stroke-width="1.2"/></svg>
<svg style="left:293px;top:507.5px" width="13" height="12" viewBox="0 0 13 12"><circle cx="6.5" cy="3.2" r="3" fill="#2F73C2"/><path d="M0.3 12 C0.3 7.6 2.7 7 6.5 7 C10.3 7 12.7 7.6 12.7 12 Z" fill="#2F73C2"/></svg>
<div class="t" style="left:314.7px;top:508.14px;font-size:13.3px;line-height:13.3px;color:#222222;">Jane Hunt</div>
<div class="t" style="left:482.40px;width:60px;text-align:right;top:508.14px;font-size:13.3px;line-height:13.3px;color:#222222;">0:00</div>
<svg style="left:553.5px;top:505.5px" width="17" height="17" viewBox="0 0 17 17"><circle cx="8.5" cy="8.5" r="7.3" fill="#FFFFFF" stroke="#1A4F8F" stroke-width="1.3"/><path d="M8.5 1.3 V6.3" stroke="#1A4F8F" stroke-width="1.3"/><circle cx="8.5" cy="8.9" r="2.5" fill="#FFFFFF" stroke="#1A4F8F" stroke-width="1.2"/></svg>
<div style="left:376px;top:506px;width:1px;height:16px;background:#111111;"></div>
<div style="left:287px;top:499px;width:296px;height:70px;background:transparent;box-sizing:border-box;border:4px solid #F8A628;box-shadow:inset 1px 1px 2px rgba(0,0,0,0.28), 2px 2px 3px rgba(0,0,0,0.3)"></div>
<div style="left:315px;top:523px;width:184px;height:40px;background:#FFFFFF;box-sizing:border-box;border:1px solid #7A7A7A;box-shadow:2px 2px 3px rgba(0,0,0,0.35)"></div>
<div style="left:316px;top:524px;width:182px;height:19px;background:#0A77D5;"></div>
<div class="t" style="left:320.5px;top:528.10px;font-size:11.7px;line-height:11.7px;color:#FFFFFF;">Jane Hunt</div>
<svg style="left:485px;top:550px" width="11" height="11" viewBox="0 0 11 11"><path d="M0 11 L11 0" stroke="#E2E2E2" stroke-width="1"/><g fill="#A9A9A9"><rect x="8" y="2" width="1.5" height="1.5"/><rect x="5" y="5" width="1.5" height="1.5"/><rect x="8" y="5" width="1.5" height="1.5"/><rect x="2" y="8" width="1.5" height="1.5"/><rect x="5" y="8" width="1.5" height="1.5"/><rect x="8" y="8" width="1.5" height="1.5"/></g></svg>
<div style="left:278px;top:527px;width:1px;height:30px;background:#F5F8FB;"></div>
<div style="left:281px;top:527px;width:1px;height:30px;background:#F5F8FB;"></div>
<div style="left:587px;top:566px;width:1px;height:30px;background:#F5F8FB;"></div>
<div style="left:590px;top:566px;width:1px;height:30px;background:#F5F8FB;"></div>
<div style="left:1402px;top:527px;width:1px;height:29px;background:#F5F8FB;"></div>
<div style="left:1405px;top:527px;width:1px;height:29px;background:#F5F8FB;"></div>
<div style="left:592px;top:356px;width:78px;height:39px;background:#E5ECF5;"></div>
<div class="t" style="left:604px;top:370.93px;font-size:11.3px;line-height:11.3px;color:#333333;">Tasks (13)</div>
<div style="left:679px;top:358px;width:125px;height:37px;background:#B3C6DF;"></div>
<div class="t" style="left:690.4px;top:371.87px;font-size:11.5px;line-height:11.5px;color:#333333;">Session Description</div>
<div style="left:815px;top:358px;width:150px;height:37px;background:#B3C6DF;"></div>
<div class="t" style="left:826px;top:371.87px;font-size:11.5px;line-height:11.5px;color:#333333;">Session Attachments (4)</div>
<div style="left:592px;top:395px;width:803px;height:21px;background:#E5ECF5;"></div>
<div style="left:592px;top:416px;width:803px;height:1px;background:#D0D0D0;"></div>
<div style="left:817px;top:395px;width:1px;height:210px;background:#D5D5D5;"></div>
<div style="left:924px;top:395px;width:1px;height:210px;background:#D5D5D5;"></div>
<div style="left:1081px;top:395px;width:1px;height:210px;background:#D5D5D5;"></div>
<div style="left:1238px;top:395px;width:1px;height:210px;background:#D5D5D5;"></div>
<div class="t" style="left:647.80px;width:100px;text-align:center;top:398.84px;font-size:12px;line-height:12px;color:#333333;">Name</div>
<svg style="left:804px;top:403px" width="9" height="5.5" viewBox="0 0 9 5.5"><path d="M0 5.5 L4.5 0 L9 5.5 Z" fill="#777"/></svg>
<div class="t" style="left:821.30px;width:100px;text-align:center;top:399.18px;font-size:11.6px;line-height:11.6px;color:#333333;">Time Spent</div>
<div class="t" style="left:952.50px;width:100px;text-align:center;top:399.18px;font-size:11.6px;line-height:11.6px;color:#333333;">Status</div>
<div class="t" style="left:1110.30px;width:100px;text-align:center;top:399.18px;font-size:11.6px;line-height:11.6px;color:#333333;">Assignee</div>
<div class="t" style="left:1267.00px;width:100px;text-align:center;top:398.84px;font-size:12px;line-height:12px;color:#333333;">Priority</div>
<div style="left:592px;top:417px;width:803px;height:188px;background:#FFFFFF;"></div>
<div style="left:633px;top:417px;width:1px;height:188px;background:#D5D5D5;"></div>
<div style="left:817px;top:417px;width:1px;height:188px;background:#D5D5D5;"></div>
<div style="left:924px;top:417px;width:1px;height:188px;background:#D5D5D5;"></div>
<div style="left:1081px;top:417px;width:1px;height:188px;background:#D5D5D5;"></div>
<div style="left:1238px;top:417px;width:1px;height:188px;background:#D5D5D5;"></div>
<div style="left:634px;top:522px;width:761px;height:20px;background:#E6E6E6;"></div>
<div style="left:633px;top:437px;width:762px;height:1px;background:#D5D5D5;"></div>
<svg style="left:598.5px;top:424.5px" width="5" height="7" viewBox="0 0 5 7"><path d="M0.5 0 L4.5 3.5 L0.5 7 Z" fill="#6E6E6E"/></svg>
<svg style="left:610px;top:418px" width="16" height="17" viewBox="0 0 16 17"><path d="M3.5 4 L4.5 1 H11.5 L12.5 4 Z" fill="#555555"/><rect x="0.75" y="4.25" width="14.5" height="11.5" fill="#FFFFFF" stroke="#1F4F8F" stroke-width="1.5"/><rect x="3.5" y="6.5" width="2" height="2" fill="none" stroke="#1F4F8F" stroke-width="1"/><rect x="3.5" y="11.5" width="2" height="2" fill="none" stroke="#1F4F8F" stroke-width="1"/><g fill="#3A6FB8"><rect x="7" y="6" width="6" height="1"/><rect x="7" y="8" width="4.5" height="1"/><rect x="7" y="11" width="6" height="1"/><rect x="7" y="13" width="4.5" height="1"/></g></svg>
<div class="t" style="left:638.3px;top:420.66px;font-size:13.4px;line-height:13.4px;color:#111111;">Add TestCases to Com.Rep...</div>
<div class="t" style="left:822.2px;top:420.66px;font-size:13.4px;line-height:13.4px;color:#111111;">01:45</div>
<svg style="left:926.3px;top:418.0px" width="17" height="17" viewBox="0 0 17 17"><circle cx="8.5" cy="8.5" r="7.3" fill="#FFFFFF" stroke="#1A4F8F" stroke-width="1.3"/><path d="M8.5 1.3 V6.3" stroke="#1A4F8F" stroke-width="1.3"/><circle cx="8.5" cy="8.9" r="2.5" fill="#FFFFFF" stroke="#1A4F8F" stroke-width="1.2"/></svg>
<div class="t" style="left:949.2px;top:420.66px;font-size:13.4px;line-height:13.4px;color:#111111;">Planned</div>
<div class="t" style="left:1086.4px;top:420.66px;font-size:13.4px;line-height:13.4px;color:#111111;">Patrik Hicks</div>
<div class="t" style="left:1243.2px;top:420.66px;font-size:13.4px;line-height:13.4px;color:#111111;">Medium</div>
<div style="left:633px;top:458px;width:762px;height:1px;background:#D5D5D5;"></div>
<svg style="left:598.5px;top:445.5px" width="5" height="7" viewBox="0 0 5 7"><path d="M0.5 0 L4.5 3.5 L0.5 7 Z" fill="#6E6E6E"/></svg>
<svg style="left:610px;top:439px" width="16" height="17" viewBox="0 0 16 17"><path d="M3.5 4 L4.5 1 H11.5 L12.5 4 Z" fill="#555555"/><rect x="0.75" y="4.25" width="14.5" height="11.5" fill="#FFFFFF" stroke="#1F4F8F" stroke-width="1.5"/><rect x="3.5" y="6.5" width="2" height="2" fill="none" stroke="#1F4F8F" stroke-width="1"/><rect x="3.5" y="11.5" width="2" height="2" fill="none" stroke="#1F4F8F" stroke-width="1"/><g fill="#3A6FB8"><rect x="7" y="6" width="6" height="1"/><rect x="7" y="8" width="4.5" height="1"/><rect x="7" y="11" width="6" height="1"/><rect x="7" y="13" width="4.5" height="1"/></g></svg>
<div class="t" style="left:638.3px;top:441.66px;font-size:13.4px;line-height:13.4px;color:#111111;">Create ExecutionList Deskt...</div>
<div class="t" style="left:822.2px;top:441.66px;font-size:13.4px;line-height:13.4px;color:#111111;">01:00</div>
<svg style="left:926.3px;top:439.0px" width="17" height="17" viewBox="0 0 17 17"><circle cx="8.5" cy="8.5" r="7.3" fill="#3A78C8" stroke="#1A4F8F" stroke-width="1.3"/><path d="M8.5 1.3 V6.3" stroke="#1A4F8F" stroke-width="1.3"/><circle cx="8.5" cy="8.9" r="2.5" fill="#FFFFFF" stroke="#1A4F8F" stroke-width="1.2"/></svg>
<div class="t" style="left:949.2px;top:441.66px;font-size:13.4px;line-height:13.4px;color:#111111;">Completed</div>
<div class="t" style="left:1086.4px;top:441.66px;font-size:13.4px;line-height:13.4px;color:#111111;">Jonas Jones</div>
<div class="t" style="left:1243.2px;top:441.66px;font-size:13.4px;line-height:13.4px;color:#111111;">Low</div>
<div style="left:633px;top:479px;width:762px;height:1px;background:#D5D5D5;"></div>
<svg style="left:598.5px;top:466.5px" width="5" height="7" viewBox="0 0 5 7"><path d="M0.5 0 L4.5 3.5 L0.5 7 Z" fill="#6E6E6E"/></svg>
<svg style="left:610px;top:460px" width="16" height="17" viewBox="0 0 16 17"><path d="M3.5 4 L4.5 1 H11.5 L12.5 4 Z" fill="#555555"/><rect x="0.75" y="4.25" width="14.5" height="11.5" fill="#FFFFFF" stroke="#1F4F8F" stroke-width="1.5"/><rect x="3.5" y="6.5" width="2" height="2" fill="none" stroke="#1F4F8F" stroke-width="1"/><rect x="3.5" y="11.5" width="2" height="2" fill="none" stroke="#1F4F8F" stroke-width="1"/><g fill="#3A6FB8"><rect x="7" y="6" width="6" height="1"/><rect x="7" y="8" width="4.5" height="1"/><rect x="7" y="11" width="6" height="1"/><rect x="7" y="13" width="4.5" height="1"/></g></svg>
<div class="t" style="left:638.3px;top:462.66px;font-size:13.4px;line-height:13.4px;color:#111111;">Create ExecutionList Mobile</div>
<div class="t" style="left:822.2px;top:462.66px;font-size:13.4px;line-height:13.4px;color:#111111;">01:30</div>
<svg style="left:926.3px;top:460.0px" width="17" height="17" viewBox="0 0 17 17"><circle cx="8.5" cy="8.5" r="7.3" fill="#3A78C8" stroke="#1A4F8F" stroke-width="1.3"/><path d="M8.5 1.3 V6.3" stroke="#1A4F8F" stroke-width="1.3"/><circle cx="8.5" cy="8.9" r="2.5" fill="#FFFFFF" stroke="#1A4F8F" stroke-width="1.2"/></svg>
<div class="t" style="left:949.2px;top:462.66px;font-size:13.4px;line-height:13.4px;color:#111111;">Completed</div>
<div class="t" style="left:1086.4px;top:462.66px;font-size:13.4px;line-height:13.4px;color:#111111;">Marie Stokes</div>
<div class="t" style="left:1243.2px;top:462.66px;font-size:13.4px;line-height:13.4px;color:#111111;">Medium</div>
<div style="left:633px;top:500px;width:762px;height:1px;background:#D5D5D5;"></div>
<svg style="left:598.5px;top:487.5px" width="5" height="7" viewBox="0 0 5 7"><path d="M0.5 0 L4.5 3.5 L0.5 7 Z" fill="#6E6E6E"/></svg>
<svg style="left:610px;top:481px" width="16" height="17" viewBox="0 0 16 17"><path d="M3.5 4 L4.5 1 H11.5 L12.5 4 Z" fill="#555555"/><rect x="0.75" y="4.25" width="14.5" height="11.5" fill="#FFFFFF" stroke="#1F4F8F" stroke-width="1.5"/><rect x="3.5" y="6.5" width="2" height="2" fill="none" stroke="#1F4F8F" stroke-width="1"/><rect x="3.5" y="11.5" width="2" height="2" fill="none" stroke="#1F4F8F" stroke-width="1"/><g fill="#3A6FB8"><rect x="7" y="6" width="6" height="1"/><rect x="7" y="8" width="4.5" height="1"/><rect x="7" y="11" width="6" height="1"/><rect x="7" y="13" width="4.5" height="1"/></g></svg>
<div class="t" style="left:638.3px;top:483.66px;font-size:13.4px;line-height:13.4px;color:#111111;">Create TestCases</div>
<div class="t" style="left:822.2px;top:483.66px;font-size:13.4px;line-height:13.4px;color:#111111;">00:30</div>
<svg style="left:926.3px;top:481.0px" width="17" height="17" viewBox="0 0 17 17"><circle cx="8.5" cy="8.5" r="7.3" fill="#3A78C8" stroke="#1A4F8F" stroke-width="1.3"/><path d="M8.5 1.3 V6.3" stroke="#1A4F8F" stroke-width="1.3"/><circle cx="8.5" cy="8.9" r="2.5" fill="#FFFFFF" stroke="#1A4F8F" stroke-width="1.2"/></svg>
<div class="t" style="left:949.2px;top:483.66px;font-size:13.4px;line-height:13.4px;color:#111111;">Completed</div>
<div class="t" style="left:1086.4px;top:483.66px;font-size:13.4px;line-height:13.4px;color:#111111;">Patrik Hicks</div>
<div class="t" style="left:1243.2px;top:483.66px;font-size:13.4px;line-height:13.4px;color:#111111;">Medium</div>
<div style="left:633px;top:521px;width:762px;height:1px;background:#D5D5D5;"></div>
<svg style="left:610px;top:502px" width="16" height="17" viewBox="0 0 16 17"><path d="M3.5 4 L4.5 1 H11.5 L12.5 4 Z" fill="#555555"/><rect x="0.75" y="4.25" width="14.5" height="11.5" fill="#FFFFFF" stroke="#1F4F8F" stroke-width="1.5"/><rect x="3.5" y="6.5" width="2" height="2" fill="none" stroke="#1F4F8F" stroke-width="1"/><rect x="3.5" y="11.5" width="2" height="2" fill="none" stroke="#1F4F8F" stroke-width="1"/><g fill="#3A6FB8"><rect x="7" y="6" width="6" height="1"/><rect x="7" y="8" width="4.5" height="1"/><rect x="7" y="11" width="6" height="1"/><rect x="7" y="13" width="4.5" height="1"/></g></svg>
<div class="t" style="left:638.3px;top:504.66px;font-size:13.4px;line-height:13.4px;color:#111111;">Do the Handover</div>
<div class="t" style="left:822.2px;top:504.66px;font-size:13.4px;line-height:13.4px;color:#111111;">04:00</div>
<svg style="left:926.3px;top:502.0px" width="17" height="17" viewBox="0 0 17 17"><circle cx="8.5" cy="8.5" r="7.3" fill="#3A78C8" stroke="#1A4F8F" stroke-width="1.3"/><path d="M8.5 1.3 V6.3" stroke="#1A4F8F" stroke-width="1.3"/><circle cx="8.5" cy="8.9" r="2.5" fill="#FFFFFF" stroke="#1A4F8F" stroke-width="1.2"/></svg>
<div class="t" style="left:949.2px;top:504.66px;font-size:13.4px;line-height:13.4px;color:#111111;">Completed</div>
<div class="t" style="left:1086.4px;top:504.66px;font-size:13.4px;line-height:13.4px;color:#111111;">Jonas Jones</div>
<div class="t" style="left:1243.2px;top:504.66px;font-size:13.4px;line-height:13.4px;color:#111111;">High</div>
<div style="left:633px;top:542px;width:762px;height:1px;background:#D5D5D5;"></div>
<svg style="left:610px;top:523px" width="16" height="17" viewBox="0 0 16 17"><path d="M3.5 4 L4.5 1 H11.5 L12.5 4 Z" fill="#555555"/><rect x="0.75" y="4.25" width="14.5" height="11.5" fill="#FFFFFF" stroke="#1F4F8F" stroke-width="1.5"/><rect x="3.5" y="6.5" width="2" height="2" fill="none" stroke="#1F4F8F" stroke-width="1"/><rect x="3.5" y="11.5" width="2" height="2" fill="none" stroke="#1F4F8F" stroke-width="1"/><g fill="#3A6FB8"><rect x="7" y="6" width="6" height="1"/><rect x="7" y="8" width="4.5" height="1"/><rect x="7" y="11" width="6" height="1"/><rect x="7" y="13" width="4.5" height="1"/></g></svg>
<div class="t" style="left:638.3px;top:525.66px;font-size:13.4px;line-height:13.4px;color:#111111;">Plan HandOver to XTeam</div>
<div class="t" style="left:822.2px;top:525.66px;font-size:13.4px;line-height:13.4px;color:#111111;">00:45</div>
<svg style="left:926.3px;top:523.0px" width="17" height="17" viewBox="0 0 17 17"><circle cx="8.5" cy="8.5" r="7.3" fill="#FFFFFF" stroke="#1A4F8F" stroke-width="1.3"/><path d="M8.5 1.3 V6.3" stroke="#1A4F8F" stroke-width="1.3"/><circle cx="8.5" cy="8.9" r="2.5" fill="#FFFFFF" stroke="#1A4F8F" stroke-width="1.2"/></svg>
<div class="t" style="left:949.2px;top:525.66px;font-size:13.4px;line-height:13.4px;color:#111111;">Planned</div>
<div class="t" style="left:1086.4px;top:525.66px;font-size:13.4px;line-height:13.4px;color:#111111;">Dusan Scott</div>
<div class="t" style="left:1243.2px;top:525.66px;font-size:13.4px;line-height:13.4px;color:#111111;">Medium</div>
<div style="left:633px;top:563px;width:762px;height:1px;background:#D5D5D5;"></div>
<svg style="left:610px;top:544px" width="16" height="17" viewBox="0 0 16 17"><path d="M3.5 4 L4.5 1 H11.5 L12.5 4 Z" fill="#555555"/><rect x="0.75" y="4.25" width="14.5" height="11.5" fill="#FFFFFF" stroke="#1F4F8F" stroke-width="1.5"/><rect x="3.5" y="6.5" width="2" height="2" fill="none" stroke="#1F4F8F" stroke-width="1"/><rect x="3.5" y="11.5" width="2" height="2" fill="none" stroke="#1F4F8F" stroke-width="1"/><g fill="#3A6FB8"><rect x="7" y="6" width="6" height="1"/><rect x="7" y="8" width="4.5" height="1"/><rect x="7" y="11" width="6" height="1"/><rect x="7" y="13" width="4.5" height="1"/></g></svg>
<div class="t" style="left:638.3px;top:546.66px;font-size:13.4px;line-height:13.4px;color:#111111;">Plan Release Party</div>
<div class="t" style="left:822.2px;top:546.66px;font-size:13.4px;line-height:13.4px;color:#111111;">01:30</div>
<svg style="left:926.3px;top:544.0px" width="17" height="17" viewBox="0 0 17 17"><circle cx="8.5" cy="8.5" r="7.3" fill="#FFFFFF"/><path d="M8.5 8.5 V1.2 A7.3 7.3 0 0 1 11.5 15.2 Z" fill="#3A78C8"/><circle cx="8.5" cy="8.5" r="7.3" fill="none" stroke="#1A4F8F" stroke-width="1.3"/><path d="M8.5 1.3 V6.3" stroke="#1A4F8F" stroke-width="1.3"/><circle cx="8.5" cy="8.9" r="2.5" fill="#FFFFFF" stroke="#1A4F8F" stroke-width="1.2"/></svg>
<div class="t" style="left:949.2px;top:546.66px;font-size:13.4px;line-height:13.4px;color:#111111;">In Progress</div>
<div class="t" style="left:1086.4px;top:546.66px;font-size:13.4px;line-height:13.4px;color:#111111;">Kaya Tonks</div>
<div class="t" style="left:1243.2px;top:546.66px;font-size:13.4px;line-height:13.4px;color:#111111;">Medium</div>
<div style="left:633px;top:584px;width:762px;height:1px;background:#D5D5D5;"></div>
<svg style="left:610px;top:565px" width="16" height="17" viewBox="0 0 16 17"><path d="M3.5 4 L4.5 1 H11.5 L12.5 4 Z" fill="#555555"/><rect x="0.75" y="4.25" width="14.5" height="11.5" fill="#FFFFFF" stroke="#1F4F8F" stroke-width="1.5"/><rect x="3.5" y="6.5" width="2" height="2" fill="none" stroke="#1F4F8F" stroke-width="1"/><rect x="3.5" y="11.5" width="2" height="2" fill="none" stroke="#1F4F8F" stroke-width="1"/><g fill="#3A6FB8"><rect x="7" y="6" width="6" height="1"/><rect x="7" y="8" width="4.5" height="1"/><rect x="7" y="11" width="6" height="1"/><rect x="7" y="13" width="4.5" height="1"/></g></svg>
<div class="t" style="left:638.3px;top:567.66px;font-size:13.4px;line-height:13.4px;color:#111111;">Run Regression</div>
<div class="t" style="left:822.2px;top:567.66px;font-size:13.4px;line-height:13.4px;color:#111111;">01:30</div>
<svg style="left:926.3px;top:565.0px" width="17" height="17" viewBox="0 0 17 17"><circle cx="8.5" cy="8.5" r="7.3" fill="#FFFFFF"/><path d="M8.5 8.5 V1.2 A7.3 7.3 0 0 1 11.5 15.2 Z" fill="#3A78C8"/><circle cx="8.5" cy="8.5" r="7.3" fill="none" stroke="#1A4F8F" stroke-width="1.3"/><path d="M8.5 1.3 V6.3" stroke="#1A4F8F" stroke-width="1.3"/><circle cx="8.5" cy="8.9" r="2.5" fill="#FFFFFF" stroke="#1A4F8F" stroke-width="1.2"/></svg>
<div class="t" style="left:949.2px;top:567.66px;font-size:13.4px;line-height:13.4px;color:#111111;">In Progress</div>
<div class="t" style="left:1086.4px;top:567.66px;font-size:13.4px;line-height:13.4px;color:#111111;">Jonas Jones</div>
<div class="t" style="left:1243.2px;top:567.66px;font-size:13.4px;line-height:13.4px;color:#111111;">Medium</div>
<div style="left:633px;top:605px;width:762px;height:1px;background:#D5D5D5;"></div>
<svg style="left:610px;top:586px" width="16" height="17" viewBox="0 0 16 17"><path d="M3.5 4 L4.5 1 H11.5 L12.5 4 Z" fill="#555555"/><rect x="0.75" y="4.25" width="14.5" height="11.5" fill="#FFFFFF" stroke="#1F4F8F" stroke-width="1.5"/><rect x="3.5" y="6.5" width="2" height="2" fill="none" stroke="#1F4F8F" stroke-width="1"/><rect x="3.5" y="11.5" width="2" height="2" fill="none" stroke="#1F4F8F" stroke-width="1"/><g fill="#3A6FB8"><rect x="7" y="6" width="6" height="1"/><rect x="7" y="8" width="4.5" height="1"/><rect x="7" y="11" width="6" height="1"/><rect x="7" y="13" width="4.5" height="1"/></g></svg>
<div class="t" style="left:638.3px;top:588.66px;font-size:13.4px;line-height:13.4px;color:#111111;">Schedule CI_Tests</div>
<div class="t" style="left:822.2px;top:588.66px;font-size:13.4px;line-height:13.4px;color:#111111;">01:00</div>
<svg style="left:926.3px;top:586.0px" width="17" height="17" viewBox="0 0 17 17"><circle cx="8.5" cy="8.5" r="7.3" fill="#FFFFFF"/><path d="M8.5 8.5 V1.2 A7.3 7.3 0 0 1 11.5 15.2 Z" fill="#3A78C8"/><circle cx="8.5" cy="8.5" r="7.3" fill="none" stroke="#1A4F8F" stroke-width="1.3"/><path d="M8.5 1.3 V6.3" stroke="#1A4F8F" stroke-width="1.3"/><circle cx="8.5" cy="8.9" r="2.5" fill="#FFFFFF" stroke="#1A4F8F" stroke-width="1.2"/></svg>
<div class="t" style="left:949.2px;top:588.66px;font-size:13.4px;line-height:13.4px;color:#111111;">In Progress</div>
<div class="t" style="left:1086.4px;top:588.66px;font-size:13.4px;line-height:13.4px;color:#111111;">Jonas Jones</div>
<div class="t" style="left:1243.2px;top:588.66px;font-size:13.4px;line-height:13.4px;color:#111111;">High</div>
</body></html>
